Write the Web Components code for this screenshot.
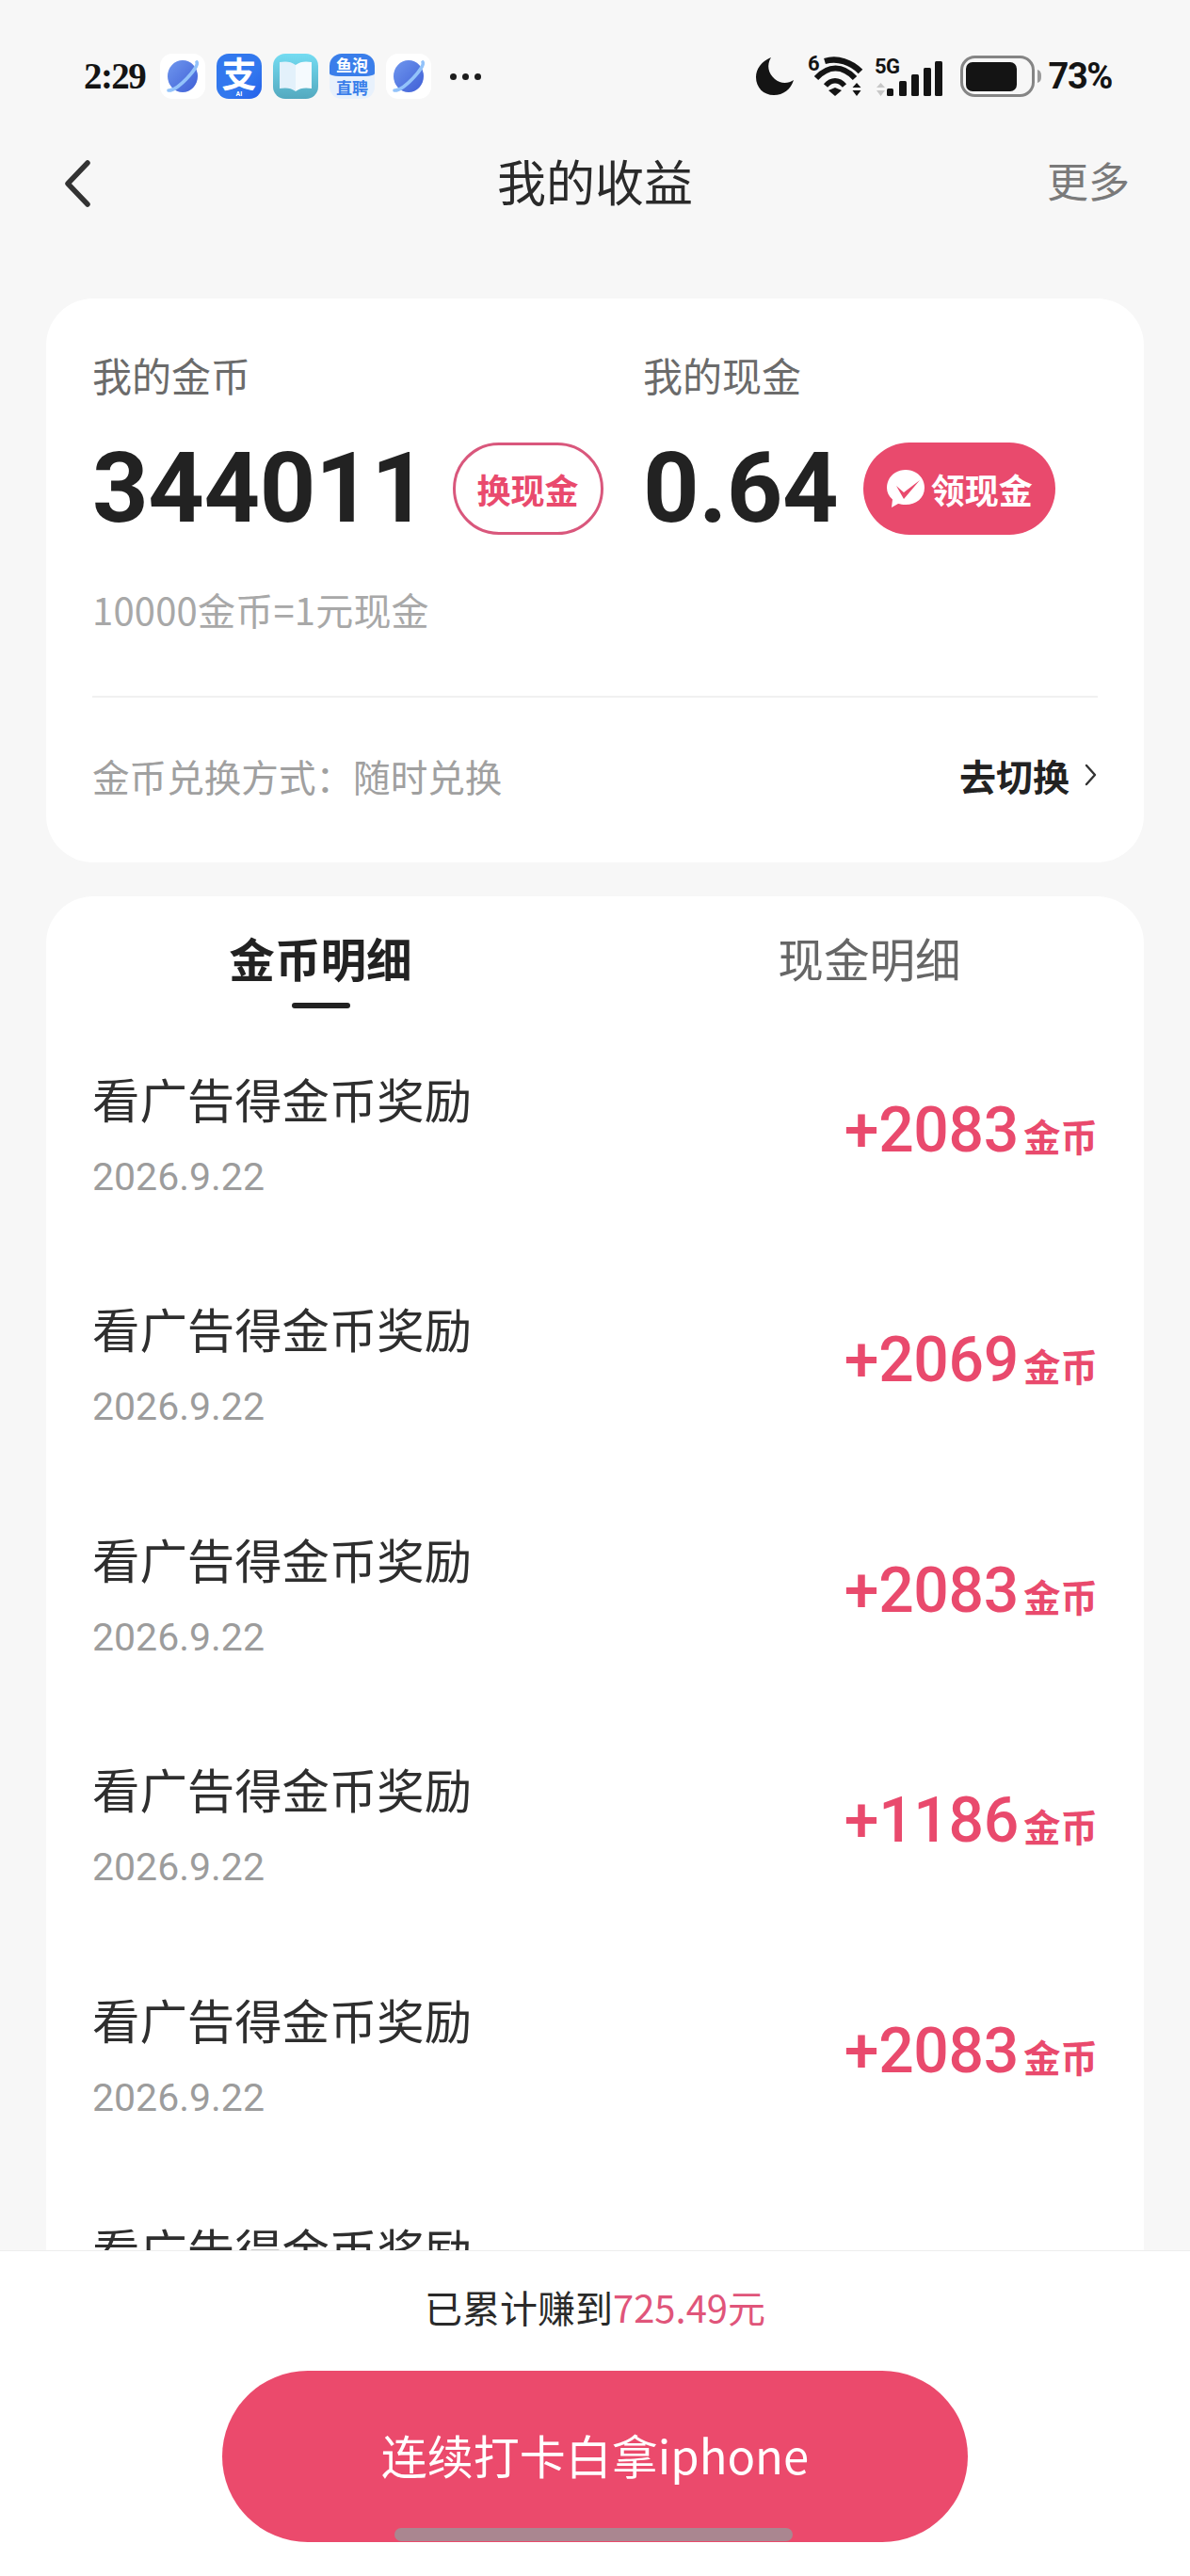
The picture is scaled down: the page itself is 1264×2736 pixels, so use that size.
<!DOCTYPE html>
<html lang="zh">
<head>
<meta charset="utf-8">
<title>我的收益</title>
<style>
  html, body { margin: 0; padding: 0; background: #f7f7f7; }
  body { font-family: "Noto Sans CJK SC", Roboto, sans-serif; }
</style>
</head>
<body>

<earnings-page>
  <status-bar slot="status"></status-bar>
  <nav-bar slot="nav" more="更多">我的收益</nav-bar>
  <balance-card slot="balance"></balance-card>
  <ledger-card slot="ledger">
    <ledger-row amount="+2083" date="2026.9.22">看广告得金币奖励</ledger-row>
    <ledger-row amount="+2069" date="2026.9.22">看广告得金币奖励</ledger-row>
    <ledger-row amount="+2083" date="2026.9.22">看广告得金币奖励</ledger-row>
    <ledger-row amount="+1186" date="2026.9.22">看广告得金币奖励</ledger-row>
    <ledger-row amount="+2083" date="2026.9.22">看广告得金币奖励</ledger-row>
    <ledger-row>看广告得金币奖励</ledger-row>
  </ledger-card>
  <cta-footer slot="footer" total="725.49元">连续打卡白拿iphone</cta-footer>
</earnings-page>

<script>
const CJK = '"Noto Sans CJK SC", Roboto, sans-serif'
const PINK = '#e94a6d'

class EarningsPage extends HTMLElement {
  constructor() {
    super()
    this.attachShadow({ mode: 'open' })
  }
  connectedCallback() {
    this.shadowRoot.innerHTML = `
    <style>
      :host { display: flex; flex-direction: column; width: 1264px; height: 2736px; overflow: hidden; background: #f7f7f7; font-family: ${CJK}; }
      .cards { flex: 1; min-height: 0; display: flex; flex-direction: column; gap: 36px; padding: 89px 49px 0; }
    </style>
    <slot name="status"></slot>
    <slot name="nav"></slot>
    <div class="cards">
      <slot name="balance"></slot>
      <slot name="ledger"></slot>
    </div>
    <slot name="footer"></slot>
    `
  }
}

class AppTile extends HTMLElement {
  static get observedAttributes() {
    return ['kind']
  }
  constructor() {
    super()
    this.attachShadow({ mode: 'open' })
  }
  attributeChangedCallback() {
    this.render()
  }
  connectedCallback() {
    this.render()
  }
  render() {
    const kind = this.getAttribute('kind')
    let inner = ''
    if (kind === 'planet') {
      inner = `<svg width="48" height="48" viewBox="0 0 48 48">
        <defs><linearGradient id="pl" x1="0" y1="0" x2="1" y2="1"><stop offset="0" stop-color="#6f97ee"/><stop offset="1" stop-color="#3f5fd6"/></linearGradient></defs>
        <ellipse cx="24" cy="24" rx="16" ry="17" fill="url(#pl)"/>
        <path d="M39 9C42 14 18 40 9 39" fill="none" stroke="#93c3fa" stroke-width="3.6" stroke-linecap="round"/>
      </svg>`
    } else if (kind === 'pay') {
      inner = `<span class="zhi">支</span><span class="ai">AI</span>`
    } else if (kind === 'book') {
      inner = `<svg width="48" height="48" viewBox="0 0 48 48">
        <path d="M24 12C19 8 13 8 7 9V37C13 36 19 36 24 40Z" fill="#e3f1fb"/>
        <path d="M24 12C29 8 35 8 41 9V37C35 36 29 36 24 40Z" fill="#f5fafe"/>
      </svg>`
    } else {
      inner = `<div class="top">鱼泡</div><div class="bottom">直聘</div>`
    }
    this.shadowRoot.innerHTML = `
    <style>
      :host { display: block; position: relative; width: 48px; height: 48px; border-radius: 13px; background: #fff; font-family: ${CJK}; }
      :host([kind="pay"]) { background: linear-gradient(135deg, #3278ee 60%, #2560ea); color: #fff; text-align: center; }
      :host([kind="book"]) { background: linear-gradient(180deg, #74dcf2, #54a9bf); }
      :host([kind="fish"]) { background: #e8f1fc; }
      svg { display: block; }
      .zhi { display: block; font-size: 37px; line-height: 40px; font-weight: 700; }
      .ai { position: absolute; left: 0; right: 0; bottom: 0; font: 700 7px/9px Roboto, sans-serif; }
      .top { height: 24px; background: #3a7eea; color: #fff; font-size: 17px; font-weight: 700; line-height: 24px; text-align: center; border-radius: 13px 13px 10px 10px / 13px 13px 3px 3px; }
      .bottom { height: 24px; color: #3a7eea; font-size: 17px; font-weight: 700; line-height: 24px; text-align: center; }
    </style>
    ${inner}
    `
  }
}

class StatusBar extends HTMLElement {
  constructor() {
    super()
    this.attachShadow({ mode: 'open' })
  }
  connectedCallback() {
    this.shadowRoot.innerHTML = `
    <style>
      :host { display: flex; align-items: center; justify-content: space-between; height: 162px; padding: 0 83px 0 89px; color: #141414; box-sizing: border-box; }
      .left, .right { display: flex; align-items: center; }
      .time { font: 700 39px/48px "Liberation Serif", serif; letter-spacing: -1.6px; width: 68px; margin-right: 13px; white-space: nowrap; }
      .tiles { display: flex; gap: 12px; }
      .dots { display: flex; gap: 6px; margin-left: 20px; }
      .dots i { width: 7px; height: 7px; border-radius: 50%; background: #1c1c1c; }
      svg { display: block; overflow: visible; }
      .moon { margin-right: 14px; }
      .wifi { margin-right: 9px; }
      .sig { margin-right: 18px; }
      .batt { margin-right: 8px; }
      .pct { font: 700 38px/44px Roboto, sans-serif; letter-spacing: -1.4px; white-space: nowrap; }
    </style>
    <div class="left">
      <span class="time">2:29</span>
      <div class="tiles">
        <app-tile kind="planet"></app-tile>
        <app-tile kind="pay"></app-tile>
        <app-tile kind="book"></app-tile>
        <app-tile kind="fish"></app-tile>
        <app-tile kind="planet"></app-tile>
      </div>
      <div class="dots"><i></i><i></i><i></i></div>
    </div>
    <div class="right">
      <svg class="moon" width="42" height="42" viewBox="0 0 42 42"><path d="M17 1C7 5 1 13 1 22C1 33 9 41 20 41C30 41 38 35 41 25C35 29 27 29 21 24C14 18 12 9 17 1Z" fill="#141414"/></svg>
      <svg class="wifi" width="62" height="46" viewBox="0 0 62 46">
        <text x="0" y="17" font-family="Roboto, sans-serif" font-weight="700" font-size="22" fill="#141414">6</text>
        <path d="M18 7C32 3 46 8 56 18" fill="none" stroke="#141414" stroke-width="6.5"/>
        <path d="M9 25C22 11 37 11 50 25" fill="none" stroke="#141414" stroke-width="6"/>
        <path d="M19 33C25 26 33 26 39 33" fill="none" stroke="#141414" stroke-width="5.5"/>
        <path d="M29 44L22 38L29 35L36 38Z" fill="#141414"/>
        <path d="M52 30L56.500 35H47.500Z M52 44L56.500 38H47.500Z" fill="#141414"/>
      </svg>
      <svg class="sig" width="73" height="46" viewBox="0 0 73 46">
        <text x="0" y="20" font-family="Roboto, sans-serif" font-weight="700" font-size="22" letter-spacing="-0.500" fill="#141414">5G</text>
        <path d="M6.500 30L11 35H2Z M6.500 44L11 38H2Z" fill="#c8c8c8"/>
        <rect x="13" y="36" width="7" height="8" rx="1.500" fill="#141414"/>
        <rect x="26" y="28" width="8" height="16" rx="1.500" fill="#141414"/>
        <rect x="39" y="21" width="8" height="23" rx="1.500" fill="#141414"/>
        <rect x="52" y="14" width="8" height="30" rx="1.500" fill="#141414"/>
        <rect x="64" y="7" width="8" height="37" rx="1.500" fill="#141414"/>
      </svg>
      <svg class="batt" width="86" height="44" viewBox="0 0 86 44">
        <rect x="1.500" y="1.500" width="76" height="41" rx="14" fill="none" stroke="#858585" stroke-width="3"/>
        <rect x="6" y="7" width="54" height="31" rx="7" fill="#141414"/>
        <path d="M82 15C85 16 86 18 86 22C86 26 85 28 82 29Z" fill="#9a9a9a"/>
      </svg>
      <span class="pct">73%</span>
    </div>
    `
  }
}

class NavBar extends HTMLElement {
  constructor() {
    super()
    this.attachShadow({ mode: 'open' })
  }
  connectedCallback() {
    this.shadowRoot.innerHTML = `
    <style>
      :host { display: grid; grid-template-columns: 1fr auto 1fr; align-items: center; height: 66px; padding: 0 64px 0 68px; }
      svg { display: block; }
      .title { font-size: 52px; line-height: 66px; color: #2a2a2a; margin: -6px 0 0 -4px; }
      .more { justify-self: end; font-size: 44px; line-height: 60px; color: #7a7a7a; margin-top: -8px; }
    </style>
    <svg width="30" height="50" viewBox="0 0 30 50"><path d="M25 3L4 25L25 47" fill="none" stroke="#333" stroke-width="5.500" stroke-linecap="round" stroke-linejoin="round"/></svg>
    <div class="title"><slot></slot></div>
    <div class="more">${this.getAttribute('more')}</div>
    `
  }
}

class BalanceStat extends HTMLElement {
  constructor() {
    super()
    this.attachShadow({ mode: 'open' })
  }
  connectedCallback() {
    this.shadowRoot.innerHTML = `
    <style>
      :host { display: block; }
      .label { font-size: 42px; line-height: 60px; color: #6b6b6b; margin-top: -2px; }
      .row { display: flex; align-items: center; margin-top: 42px; height: 98px; gap: var(--pill-gap, 28px); }
      .value { font: 700 104px/98px Roboto, sans-serif; color: #222; letter-spacing: var(--value-track, 0); white-space: nowrap; }
    </style>
    <div class="label">${this.getAttribute('label')}</div>
    <div class="row">
      <span class="value">${this.getAttribute('value')}</span>
      <slot></slot>
    </div>
    `
  }
}

class PillButton extends HTMLElement {
  constructor() {
    super()
    this.attachShadow({ mode: 'open' })
  }
  connectedCallback() {
    const icon = this.hasAttribute('filled') ? `
      <svg width="42" height="42" viewBox="0 0 42 42">
        <path d="M21 1C32 1 41 9 41 20C41 31 32 38 21 38C18 38 15 37.500 13 37L6 41L7 32.500C3 29 1 25 1 20C1 9 10 1 21 1Z" fill="#fff"/>
        <path d="M11 18L19 25L36 12L19 32Z" fill="${PINK}"/>
      </svg>` : ''
    this.shadowRoot.innerHTML = `
    <style>
      :host { display: inline-flex; align-items: center; justify-content: center; gap: 6px; box-sizing: border-box; height: 98px; flex: none; width: 160px; border-radius: 49px; border: 3px solid #d9577c; color: ${PINK}; font-size: 36px; font-weight: 700; }
      :host([filled]) { width: 204px; border: 0; background: ${PINK}; color: #fff; padding-right: 1px; }
      svg { display: block; }
    </style>
    ${icon}<slot></slot>
    `
  }
}

class BalanceCard extends HTMLElement {
  constructor() {
    super()
    this.attachShadow({ mode: 'open' })
  }
  connectedCallback() {
    this.shadowRoot.innerHTML = `
    <style>
      :host { display: block; flex: none; box-sizing: border-box; background: #fff; border-radius: 50px; padding: 53px 49px 63px; }
      .stats { display: grid; grid-template-columns: 585px 1fr; }
      .rate { margin-top: 49px; font-size: 40px; line-height: 60px; letter-spacing: 0.2px; color: #a8a8a8; }
      .rule { height: 2px; background: #f0f0f0; margin-top: 62px; }
      .mode { display: flex; justify-content: space-between; align-items: center; height: 60px; margin-top: 52px; font-size: 39.6px; color: #a0a0a0; }
      .go { display: flex; align-items: center; gap: 14px; color: #222; font-weight: 700; font-size: 39px; }
      svg { display: block; }
    </style>
    <div class="stats">
      <balance-stat label="我的金币" value="344011" style="--pill-gap:27px;--value-track:-0.4px"><pill-button>换现金</pill-button></balance-stat>
      <balance-stat label="我的现金" value="0.64" style="--pill-gap:27px;--value-track:-0.5px"><pill-button filled>领现金</pill-button></balance-stat>
    </div>
    <div class="rate">10000金币=1元现金</div>
    <div class="rule"></div>
    <div class="mode">
      <span>金币兑换方式：随时兑换</span>
      <span class="go">去切换
        <svg width="16" height="24" viewBox="0 0 16 24"><path d="M4 2L13 12L4 22" fill="none" stroke="#333" stroke-width="2.400" stroke-linecap="round" stroke-linejoin="round"/></svg>
      </span>
    </div>
    `
  }
}

class LedgerCard extends HTMLElement {
  constructor() {
    super()
    this.attachShadow({ mode: 'open' })
  }
  connectedCallback() {
    this.shadowRoot.innerHTML = `
    <style>
      :host { display: block; flex: 1; min-height: 0; overflow: hidden; box-sizing: border-box; background: #fff; border-radius: 50px 50px 0 0; padding-top: 31px; }
      .tabs { display: grid; grid-template-columns: 1fr 1fr; text-align: center; font-size: 48.6px; line-height: 68px; color: #666; }
      .on { color: #222; font-weight: 700; }
      .bar { width: 62px; height: 6px; border-radius: 3px; background: #222; margin: 14px auto 0; }
      .list { margin-top: 65px; padding: 0 49px; }
    </style>
    <div class="tabs">
      <div class="on">金币明细<div class="bar"></div></div>
      <div>现金明细</div>
    </div>
    <div class="list"><slot></slot></div>
    `
  }
}

class LedgerRow extends HTMLElement {
  constructor() {
    super()
    this.attachShadow({ mode: 'open' })
  }
  connectedCallback() {
    const date = this.getAttribute('date')
    const amount = this.getAttribute('amount')
    this.shadowRoot.innerHTML = `
    <style>
      :host { display: flex; justify-content: space-between; align-items: flex-start; height: 244.400px; }
      .name { font-size: 50.4px; line-height: 70px; color: #2e2e2e; margin-top: -4px; }
      .date { font: 400 41px/50px Roboto, sans-serif; color: #9c9c9c; margin-top: 23px; }
      .amount { display: flex; align-items: baseline; gap: 5px; margin-top: 27px; color: ${PINK}; }
      .num { font: 500 66px/76px Roboto, sans-serif; letter-spacing: -0.3px; }
      .unit { font-size: 39.5px; font-weight: 700; }
    </style>
    <div>
      <div class="name"><slot></slot></div>
      ${date ? `<div class="date">${date}</div>` : ''}
    </div>
    ${amount ? `<div class="amount"><span class="num">${amount}</span><span class="unit">金币</span></div>` : ''}
    `
  }
}

class CtaFooter extends HTMLElement {
  constructor() {
    super()
    this.attachShadow({ mode: 'open' })
  }
  connectedCallback() {
    this.shadowRoot.innerHTML = `
    <style>
      :host { display: block; position: relative; flex: none; box-sizing: border-box; height: 346px; padding-top: 29px; background: #fff; border-top: 1px solid #eee; }
      .sum { text-align: center; font-size: 40px; line-height: 60px; color: #2a2a2a; }
      .sum span { color: #e0557a; }
      .btn { display: flex; align-items: center; justify-content: center; box-sizing: border-box; width: 792px; height: 182px; margin: 38px auto 0; padding-bottom: 6px; border-radius: 91px; background: #eb4a6c; color: #fff; font-size: 49px; }
      .home { position: absolute; left: 419px; bottom: 37px; width: 423px; height: 14px; border-radius: 7px; background: #aa8690; }
    </style>
    <div class="sum">已累计赚到<span>${this.getAttribute('total')}</span></div>
    <div class="btn"><slot></slot></div>
    <div class="home"></div>
    `
  }
}

customElements.define('earnings-page', EarningsPage)
customElements.define('app-tile', AppTile)
customElements.define('status-bar', StatusBar)
customElements.define('nav-bar', NavBar)
customElements.define('balance-stat', BalanceStat)
customElements.define('pill-button', PillButton)
customElements.define('balance-card', BalanceCard)
customElements.define('ledger-card', LedgerCard)
customElements.define('ledger-row', LedgerRow)
customElements.define('cta-footer', CtaFooter)
</script>
</body>
</html>
